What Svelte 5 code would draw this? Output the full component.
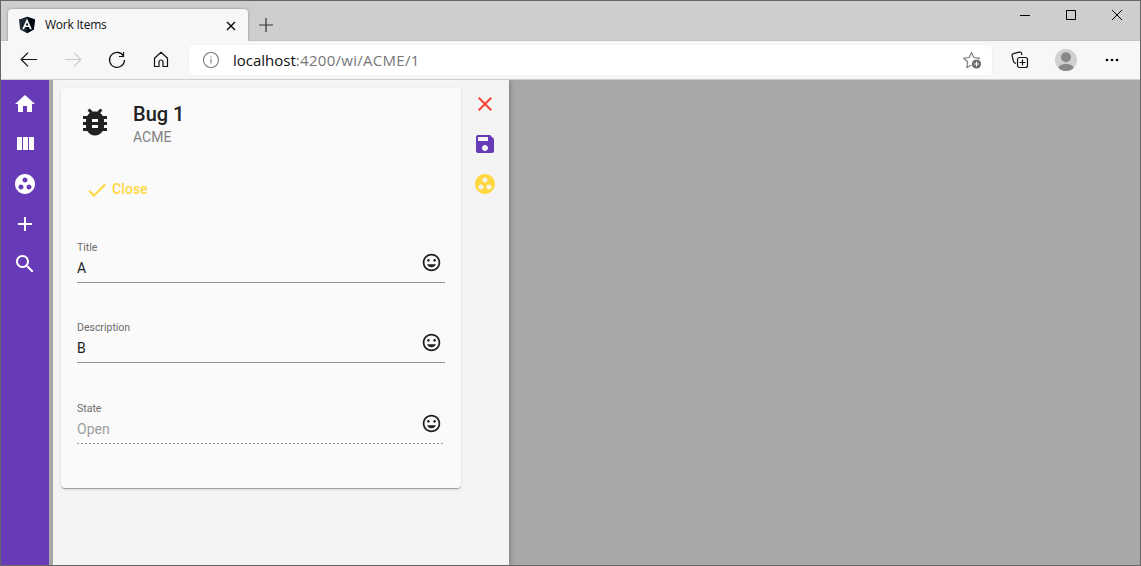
<script>
  const icons = {
    home: 'M10 20v-6h4v6h5v-8h3L12 3 2 12h3v8z',
    columns: 'M10 18h5V5h-5v13zm-6 0h5V5H4v13zM16 5v13h5V5h-5z',
    group: 'M12 2C6.480 2 2 6.480 2 12s4.480 10 10 10 10-4.480 10-10S17.520 2 12 2zM8 17.500c-1.380 0-2.500-1.120-2.500-2.500s1.120-2.500 2.500-2.500 2.500 1.120 2.500 2.500-1.120 2.500-2.500 2.500zM9.500 8c0-1.380 1.120-2.500 2.500-2.500s2.500 1.120 2.500 2.500-1.120 2.500-2.500 2.500S9.500 9.380 9.500 8zm6.500 9.500c-1.380 0-2.500-1.120-2.500-2.500s1.120-2.500 2.500-2.500 2.500 1.120 2.500 2.500-1.120 2.500-2.500 2.500z',
    add: 'M19 13h-6v6h-2v-6H5v-2h6V5h2v6h6v2z',
    search: 'M15.500 14h-.79l-.28-.27C15.410 12.590 16 11.110 16 9.500 16 5.910 13.090 3 9.500 3S3 5.910 3 9.500 5.910 16 9.500 16c1.610 0 3.090-.59 4.230-1.570l.27.28v.79l5 4.990L20.490 19l-4.990-5zm-6 0C7.010 14 5 11.990 5 9.500S7.010 5 9.500 5 14 7.010 14 9.500 11.990 14 9.500 14z',
    clear: 'M19 6.410L17.590 5 12 10.590 6.410 5 5 6.410 10.590 12 5 17.590 6.410 19 12 13.410 17.590 19 19 17.590 13.410 12z',
    save: 'M17 3H5c-1.110 0-2 .9-2 2v14c0 1.100.89 2 2 2h14c1.100 0 2-.9 2-2V7l-4-4zm-5 16c-1.660 0-3-1.340-3-3s1.340-3 3-3 3 1.340 3 3-1.340 3-3 3zm3-10H5V5h10v4z',
    check: 'M9 16.170L4.830 12l-1.420 1.410L9 19 21 7l-1.410-1.410z',
    bug: 'M20 8h-2.810c-.45-.78-1.070-1.450-1.820-1.960L17 4.410 15.590 3l-2.170 2.170C12.960 5.060 12.490 5 12 5c-.49 0-.96.06-1.410.17L8.410 3 7 4.410l1.620 1.630C7.880 6.550 7.260 7.220 6.810 8H4v2h2.090c-.05.33-.09.66-.09 1v1H4v2h2v1c0 .34.04.67.09 1H4v2h2.810c1.040 1.790 2.970 3 5.190 3s4.150-1.210 5.190-3H20v-2h-2.090c.05-.33.09-.66.09-1v-1h2v-2h-2v-1c0-.34-.04-.67-.09-1H20V8zm-6 8h-4v-2h4v2zm0-4h-4v-2h4v2z',
    mood: 'M11.990 2C6.470 2 2 6.480 2 12s4.470 10 9.990 10C17.520 22 22 17.520 22 12S17.520 2 11.990 2zM12 20c-4.420 0-8-3.580-8-8s3.580-8 8-8 8 3.580 8 8-3.580 8-8 8zm3.500-9c.83 0 1.500-.67 1.500-1.500S16.330 8 15.500 8 14 8.670 14 9.500s.67 1.500 1.500 1.500zm-7 0c.83 0 1.500-.67 1.500-1.500S9.330 8 8.500 8 7 8.670 7 9.500 7.670 11 8.500 11zm-1.500 3c.8 2.050 2.700 3.500 5 3.500s4.200-1.450 5-3.500H7z'
  };
  const nav = ['home', 'columns', 'group', 'add', 'search'];
  const actions = [
    { icon: 'clear', color: '#f44336' },
    { icon: 'save', color: '#673ab7' },
    { icon: 'group', color: '#ffd740' }
  ];
  const fields = [
    { label: 'Title', value: 'A' },
    { label: 'Description', value: 'B' },
    { label: 'State', value: 'Open', disabled: true }
  ];
</script>

{#snippet icon(name, size)}
  <svg width={size} height={size} viewBox="0 0 24 24" fill="currentColor" aria-hidden="true"><path d={icons[name]} /></svg>
{/snippet}

<div class="window">
  <header class="titlebar">
    <div class="tab">
      <svg width="18" height="18" viewBox="0 0 18 18">
        <path d="M9 .7L17 3.500 15.800 13.400 9 17.300 2.200 13.400 1 3.500z" fill="#1b2733" />
        <path d="M9 .7L17 3.500 15.800 13.400 9 17.300z" fill="#000711" />
        <path d="M9 2.600L4.200 13.200h1.900l.9-2.300h4l.9 2.300h1.900zm0 3.700l1.400 3.100H7.600z" fill="#fff" />
      </svg>
      <span class="tab-title">Work Items</span>
      <svg class="tab-close" width="10" height="10" viewBox="0 0 10 10" fill="none" stroke="#111" stroke-width="1.500"><path d="M1 1l8 8M9 1L1 9" /></svg>
    </div>
    <svg class="new-tab" width="14" height="14" viewBox="0 0 14 14" fill="none" stroke="#333" stroke-width="1.200"><path d="M7 0v14M0 7h14" /></svg>
    <div class="controls">
      <svg width="10" height="10" viewBox="0 0 10 10" stroke="#000"><path d="M0 5.500h10" /></svg>
      <svg width="10" height="10" viewBox="0 0 10 10" fill="none" stroke="#000"><path d="M.5.5h9v9h-9z" /></svg>
      <svg width="10" height="10" viewBox="0 0 10 10" stroke="#000"><path d="M0 0l10 10M10 0L0 10" /></svg>
    </div>
  </header>

  <div class="toolbar">
    <div class="browser-nav">
      <svg width="20" height="20" viewBox="0 0 20 20" fill="none" stroke="#111" stroke-width="1.200"><path d="M18 9.500H2.500M9 2.700L2.200 9.500 9 16.300" /></svg>
      <svg width="20" height="20" viewBox="0 0 20 20" fill="none" stroke="#ccc" stroke-width="1.200"><path d="M2 9.500h15.500M11 2.700l6.800 6.800-6.800 6.800" /></svg>
      <svg width="20" height="20" viewBox="0 0 20 20" fill="none" stroke="#111" stroke-width="1.200"><path d="M16.400 6A7.500 7.500 0 1 0 17.500 10M16.500 2v4.500H12" /></svg>
      <svg width="20" height="20" viewBox="0 0 20 20" fill="none" stroke="#111" stroke-width="1.200" stroke-linejoin="round"><path d="M3.500 8.200L10 2.300l6.500 5.900v8.300H12V12a2 2 0 0 0-4 0v4.500H3.500z" /></svg>
    </div>
    <div class="address">
      <svg width="18" height="18" viewBox="0 0 18 18" fill="none" stroke="#777" stroke-width="1.100"><circle cx="9" cy="9" r="7.500" /><path d="M9 8v4.500M9 5.200v1.300" /></svg>
      <span class="url"><b>localhost</b>:4200/wi/ACME/1</span>
      <svg class="star" width="20" height="20" viewBox="0 0 20 20">
        <path d="M8.500 2.500l2.300 5 5.500.7-4 3.800.8 5.500-4.600-2.500-4.700 2.500.9-5.500-4-3.800 5.500-.7z" fill="none" stroke="#777" stroke-width="1.100" />
        <circle cx="13.500" cy="14" r="5.300" fill="#fff" /><circle cx="13.500" cy="14" r="4.600" fill="#6d6d6d" />
        <path d="M13.500 11.500v5M11 14h5" stroke="#fff" />
      </svg>
    </div>
    <div class="browser-tools">
      <svg width="20" height="20" viewBox="0 0 20 20" fill="none" stroke="#111" stroke-width="1.200">
        <path d="M6 13.500l-1.500-.8a2 2 0 0 1-1-1.300L2.100 5.800A1.800 1.800 0 0 1 3.400 3.600l6-1.500A1.800 1.800 0 0 1 11.600 3.500L12 5" />
        <rect x="7.500" y="7.500" width="10" height="10" rx="2" /><path d="M12.500 9.500v6M9.500 12.500h6" />
      </svg>
      <svg width="22" height="22" viewBox="0 0 22 22"><defs><clipPath id="avatar"><circle cx="11" cy="11" r="11" /></clipPath></defs><g clip-path="url(#avatar)"><path d="M0 0h22v22H0z" fill="#d2d0ce" /><circle cx="11" cy="8.300" r="5" fill="#8a8886" /><ellipse cx="11" cy="20" rx="8" ry="5.300" fill="#8a8886" /></g></svg>
      <svg width="14" height="4" viewBox="0 0 14 4"><circle cx="2" cy="2" r="1.300" /><circle cx="7" cy="2" r="1.300" /><circle cx="12" cy="2" r="1.300" /></svg>
    </div>
  </div>

  <main class="page">
    <nav class="sidebar">
      {#each nav as name}
        <button class="icon-button" aria-label={name}>{@render icon(name, 24)}</button>
      {/each}
    </nav>
    <section class="drawer">
      <article class="card">
        <div class="card-header">
          <span class="avatar">{@render icon('bug', 36)}</span>
          <div>
            <div class="card-title">Bug 1</div>
            <div class="card-subtitle">ACME</div>
          </div>
        </div>
        <button class="close-item">{@render icon('check', 24)}<span>Close</span></button>
        <div class="fields">
          {#each fields as field}
            <div class="field" class:disabled={field.disabled}>
              <div class="field-text">
                <div class="label">{field.label}</div>
                <div class="value">{field.value}</div>
              </div>
              <span class="mood">{@render icon('mood', 21)}</span>
            </div>
          {/each}
        </div>
      </article>
      <div class="actions">
        {#each actions as action}
          <button class="icon-button" aria-label={action.icon} style:color={action.color}>{@render icon(action.icon, 24)}</button>
        {/each}
      </div>
    </section>
  </main>
</div>

<style>
  :global(body) { margin: 0; }
  * { box-sizing: border-box; }
  svg { display: block; flex: none; }
  button { border: 0; padding: 0; background: none; font: inherit; }
  .window {
    width: 1141px; height: 566px; display: flex; flex-direction: column;
    border: 1px solid #666; overflow: hidden; background: #a8a8a8;
    font-family: Roboto, sans-serif;
  }
  .titlebar { height: 40px; flex: none; display: flex; background: #cecece; border-bottom: 1px solid #c4c4c4; }
  .tab {
    width: 240px; height: 32px; margin: 8px 0 0 7px; padding: 0 12px 0 10px;
    display: flex; align-items: center; background: #f7f7f7;
    border-radius: 4px 4px 0 0; box-shadow: 0 0 3px #0005; clip-path: inset(-4px -4px 0 -4px);
  }
  .tab-title { margin-left: 9px; font: 12px/16px "Open Sans", sans-serif; letter-spacing: -0.23px; color: #111; }
  .tab-close { margin-left: auto; position: relative; top: 1px; }
  .new-tab { margin: 17px 0 0 11px; }
  .controls { display: flex; gap: 36px; margin: 9px 18px 0 auto; }
  .toolbar { height: 39px; flex: none; display: flex; align-items: center; background: #f7f7f7; border-bottom: 1px solid #d0d0d0; }
  .browser-nav { display: flex; gap: 24px; padding-left: 18px; width: 188px; }
  .address { width: 803px; height: 30px; padding: 0 9px 0 13px; display: flex; align-items: center; background: #fff; border-radius: 4px; box-shadow: 0 0 2px #0001; }
  .url { margin-left: 13px; font: 15px/22px "Open Sans", sans-serif; letter-spacing: 0.28px; color: #767676; white-space: nowrap; }
  .url b { font-weight: 400; letter-spacing: 0; color: #111; }
  .star { margin-left: auto; }
  .browser-tools { display: flex; align-items: center; margin-left: 18px; }
  .browser-tools svg:nth-child(2) { margin: 0 28px 0 25px; }
  .page { flex: 1; min-height: 0; display: flex; overflow: hidden; }
  .sidebar { width: 48px; padding-top: 4px; display: flex; flex-direction: column; align-items: center; background: #673ab7; color: #fff; }
  .icon-button { width: 40px; height: 40px; display: grid; place-items: center; color: inherit; }
  .drawer { width: 456px; margin-left: 4px; padding: 8px 0 0 8px; display: flex; align-items: flex-start; background: #f4f4f4; box-shadow: 2px 0 4px #0003; }
  .card {
    width: 400px; height: 400px; padding: 16px; flex: none; background: #fafafa; border-radius: 4px;
    box-shadow: 0 2px 1px -1px #0003, 0 1px 1px #00000024, 0 1px 3px #0000001f;
  }
  .card-header { display: flex; height: 42px; color: #212121; }
  .avatar { width: 56px; }
  .card-title { margin-top: -1px; font-size: 20px; line-height: 22px; font-weight: 500; }
  .card-subtitle { font-size: 14px; line-height: 16px; margin-top: 4px; color: #808080; }
  .close-item { display: flex; align-items: center; height: 36px; margin-top: 25px; padding-left: 8px; color: #ffd740; font-size: 14px; font-weight: 500; }
  .close-item span { margin-left: 3px; letter-spacing: 0.1px; }
  .close-item svg { position: relative; top: 1px; }
  .fields { padding-top: 31px; display: flex; flex-direction: column; gap: 35px; }
  .field { height: 45px; display: flex; justify-content: space-between; border-bottom: 1px solid #949494; color: #212121; }
  .label { font-size: 10.5px; line-height: 14px; padding-top: 3px; color: #6d6d6d; }
  .value { font-size: 14px; line-height: 16px; margin-top: 5px; }
  .mood { padding: 14px 3px 0 0; }
  .disabled { height: 46px; padding-top: 1px; border: 0; background: repeating-linear-gradient(to right, #949494 0 2px, transparent 2px 4px) bottom / 100% 1px no-repeat; }
  .disabled .value { color: #9e9e9e; }
  .actions { width: 48px; margin-top: -4px; display: flex; flex-direction: column; align-items: center; }
</style>
